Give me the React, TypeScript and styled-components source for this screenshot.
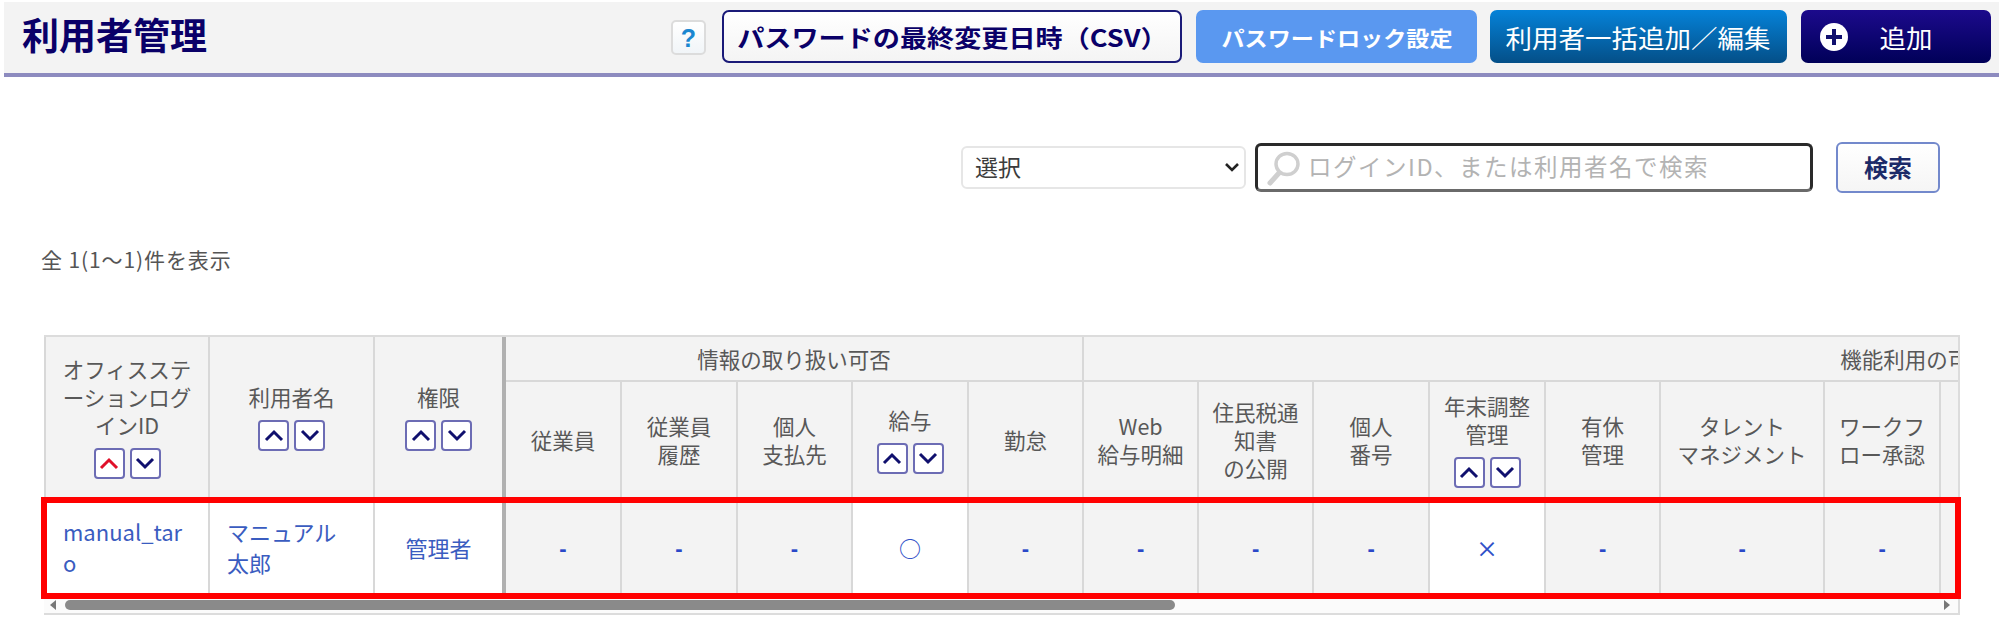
import React from "react";
import styled, { createGlobalStyle } from "styled-components";

const Global = createGlobalStyle`
  html, body { margin: 0; padding: 0; background: #fff; }
  body { font-family: "Noto Sans CJK JP", "Noto Sans", sans-serif; overflow: hidden; }
  * { box-sizing: border-box; }
`;

const Page = styled.div`
  width: 2000px;
  height: 640px;
  padding: 2px 1px 0 4px;
  overflow: hidden;
`;

const Header = styled.header`
  display: flex;
  align-items: center;
  height: 75px;
  padding: 8px 8px 10px 18px;
  background: #f3f3f3;
  border-bottom: 4px solid #8d8bbf;
`;

const Stretch = styled.span<{ $sx: number }>`
  display: inline-block;
  white-space: nowrap;
  transform: scaleX(${(p) => p.$sx});
  transform-origin: center;
`;

const Title = styled.h1`
  margin: 0 auto 5px 0;
  font-size: 37px;
  line-height: 44px;
  font-weight: 700;
  color: #0a0068;
`;

const HelpButton = styled.button`
  width: 35px;
  height: 35px;
  margin: 2px 16px 0 0;
  padding: 0;
  border: 2px solid #dcdcdc;
  border-radius: 5px;
  background: linear-gradient(#ffffff, #f1f5f8);
  color: #1b87d0;
  font: 700 25px/30px "Liberation Sans", sans-serif;
`;

const ActionButton = styled.button<{ $w: number; $size: number; $weight?: number; $bg: string; $fg: string; $border?: string; $gap?: number }>`
  display: flex;
  align-items: center;
  justify-content: center;
  width: ${(p) => p.$w}px;
  height: 53px;
  margin-right: ${(p) => p.$gap ?? 0}px;
  padding: 0;
  border: ${(p) => p.$border ?? "none"};
  border-radius: 7px;
  background: ${(p) => p.$bg};
  color: ${(p) => p.$fg};
  font-family: "Noto Sans CJK JP", sans-serif;
  font-size: ${(p) => p.$size}px;
  font-weight: ${(p) => p.$weight ?? 400};
  white-space: nowrap;
`;

const AddIcon = styled.svg`
  width: 28px;
  height: 28px;
  margin-right: 33px;
  margin-left: -41px;
`;

const SearchRow = styled.div`
  display: flex;
  align-items: center;
  justify-content: flex-end;
  height: 51px;
  margin-top: 65px;
  padding-right: 59px;
`;

const SelectWrap = styled.div`
  position: relative;
  width: 285px;
  height: 43px;
  margin-right: 9px;
`;

const Select = styled.select`
  appearance: none;
  width: 100%;
  height: 100%;
  padding: 0 40px 4px 12px;
  background: #fff;
  border: 2px solid #e6e6e6;
  border-radius: 6px;
  color: #3c3c3c;
  font-family: "Noto Sans CJK JP", sans-serif;
  font-size: 23px;
`;

const SelectChevron = styled.svg`
  position: absolute;
  right: 6px;
  top: 15px;
  width: 16px;
  height: 12px;
  pointer-events: none;
`;

const SearchBox = styled.label`
  display: flex;
  align-items: center;
  width: 558px;
  height: 49px;
  margin-right: 23px;
  padding-left: 9px;
  border: 3px solid #2a2a2a;
  border-bottom-color: #6a6a6a;
  border-radius: 6px;
  background: #fff;
`;

const SearchGlyph = styled.svg`
  flex: none;
  width: 34px;
  height: 36px;
  margin-right: 7px;
`;

const SearchInput = styled.input`
  flex: 1;
  min-width: 0;
  border: none;
  outline: none;
  padding: 0 0 4px;
  font-family: "Noto Sans CJK JP", sans-serif;
  font-size: 23.5px;
  letter-spacing: 1.5px;
  background: transparent;
  &::placeholder { color: #b3b3b3; opacity: 1; }
`;

const SearchButton = styled.button`
  width: 104px;
  height: 51px;
  padding: 0 0 2px;
  border: 2px solid #7389cc;
  border-radius: 6px;
  background: linear-gradient(#ffffff, #f5f5f5);
  color: #1c2a68;
  font-family: "Noto Sans CJK JP", sans-serif;
  font-size: 24px;
  font-weight: 700;
`;

const Count = styled.p`
  margin: 51px 0 0 37px;
  color: #555;
  font-size: 21px;
  letter-spacing: 0.9px;
  line-height: 30px;
`;

const TableFrame = styled.div`
  position: relative;
  width: 1916px;
  margin: 61px 0 0 40px;
`;

const TableScroller = styled.div`
  overflow: hidden;
  border-top: 2px solid #dcdcdc;
  border-right: 2px solid #dcdcdc;
  border-bottom: 2px solid #dcdcdc;
`;

const Table = styled.table`
  width: 2705px;
  table-layout: fixed;
  border-collapse: separate;
  border-spacing: 0;
  font-size: 21.5px;
  line-height: 28px;
`;

const Th = styled.th<{ $thick?: boolean; $first?: boolean }>`
  padding: 0;
  background: #f3f3f3;
  color: #585858;
  font-weight: 400;
  text-align: center;
  vertical-align: middle;
  border-bottom: 2px solid #d8d8d8;
  border-right: ${(p) => (p.$thick ? "4px solid #b0b0b0" : "2px solid #d8d8d8")};
  border-left: ${(p) => (p.$first ? "2px solid #d8d8d8" : "none")};
`;

const Td = styled.td<{ $thick?: boolean; $first?: boolean; $white?: boolean; $left?: boolean }>`
  height: 98px;
  padding: 0 0 2px ${(p) => (p.$left ? "17px" : "0")};
  background: ${(p) => (p.$white ? "#fff" : "#f3f3f3")};
  color: #3a5cc0;
  font-size: 22px;
  line-height: 31px;
  text-align: ${(p) => (p.$left ? "left" : "center")};
  border-right: ${(p) => (p.$thick ? "4px solid #b0b0b0" : "2px solid #d8d8d8")};
  border-left: ${(p) => (p.$first ? "2px solid #d8d8d8" : "none")};
`;

const Dash = styled.span`
  color: #2a48c8;
  font-weight: 700;
  font-family: "Liberation Sans", sans-serif;
`;

const Mark = styled.span`
  color: #3050c8;
  font-weight: 500;
`;

const SortPair = styled.div`
  display: flex;
  justify-content: center;
  gap: 5px;
  margin-top: 9px;
`;

const SortButton = styled.button`
  display: flex;
  align-items: center;
  justify-content: center;
  width: 31px;
  height: 31px;
  padding: 0;
  border: 2px solid #6c6cb4;
  border-radius: 4px;
  background: #fff;
`;

const Scrollbar = styled.div`
  display: flex;
  align-items: center;
  height: 16px;
  padding: 0 8px 0 6px;
  background: #fbfbfb;
`;

const ScrollArrow = styled.svg`
  flex: none;
  width: 6px;
  height: 10px;
`;

const ScrollThumb = styled.div`
  width: 1110px;
  height: 10px;
  margin: 0 auto 0 9px;
  border-radius: 5px;
  background: #8a8a8a;
`;

const Highlight = styled.div`
  position: absolute;
  left: -3px;
  top: 162px;
  width: 1920px;
  height: 102px;
  border: 6px solid #ff0000;
  pointer-events: none;
`;

const Sort = ({ active = false }: { active?: boolean }) => (
  <SortPair>
    <SortButton aria-label="昇順">
      <svg width="20" height="13" viewBox="0 0 20 13">
        <polyline points="2,11 10,3 18,11" fill="none" stroke={active ? "#e0102a" : "#10106e"} strokeWidth="3" />
      </svg>
    </SortButton>
    <SortButton aria-label="降順">
      <svg width="20" height="13" viewBox="0 0 20 13">
        <polyline points="2,2 10,10 18,2" fill="none" stroke="#10106e" strokeWidth="3" />
      </svg>
    </SortButton>
  </SortPair>
);

const widths = [166, 165, 131, 116, 116, 115, 116, 115, 115, 115, 116, 116, 115, 164, 116, 116, 692];

const Plain = "-";

export default function App() {
  return (
    <>
      <Global />
      <Page>
        <Header>
          <Title>利用者管理</Title>
          <HelpButton>?</HelpButton>
          <ActionButton $w={460} $size={24} $weight={700} $gap={14} $fg="#0a0068" $bg="linear-gradient(#ffffff, #f4f4f4)" $border="2px solid #1a1a78">
            <Stretch $sx={1.13}>パスワードの最終変更日時（CSV）</Stretch>
          </ActionButton>
          <ActionButton $w={281} $size={21} $weight={700} $gap={13} $fg="#fff" $bg="#5a98f0">
            <Stretch $sx={1.1}>パスワードロック設定</Stretch>
          </ActionButton>
          <ActionButton $w={297} $size={25} $gap={14} $fg="#fff" $bg="linear-gradient(#0582d8, #044f88)">
            <Stretch $sx={1.06}>利用者一括追加／編集</Stretch>
          </ActionButton>
          <ActionButton $w={190} $size={25} $fg="#fff" $bg="linear-gradient(#1c0a8c, #000058)">
            <AddIcon viewBox="0 0 28 28">
              <circle cx="14" cy="14" r="14" fill="#fff" />
              <path d="M14 6v16M6 14h16" stroke="#10106e" strokeWidth="4" />
            </AddIcon>
            <Stretch $sx={1.06}>追加</Stretch>
          </ActionButton>
        </Header>

        <SearchRow>
          <SelectWrap>
            <Select defaultValue="">
              <option value="">選択</option>
            </Select>
            <SelectChevron viewBox="0 0 16 12">
              <polyline points="2,3 8,9 14,3" fill="none" stroke="#222" strokeWidth="2.6" />
            </SelectChevron>
          </SelectWrap>
          <SearchBox>
            <SearchGlyph viewBox="0 0 34 36">
              <ellipse cx="20" cy="14" rx="11" ry="10.5" fill="none" stroke="#cfcfcf" strokeWidth="3.5" />
              <path d="M12 23L3 33" stroke="#cfcfcf" strokeWidth="5" strokeLinecap="round" />
            </SearchGlyph>
            <SearchInput placeholder="ログインID、または利用者名で検索" />
          </SearchBox>
          <SearchButton>検索</SearchButton>
        </SearchRow>

        <Count>全 1(1～1)件を表示</Count>

        <TableFrame>
          <TableScroller>
            <Table>
              <colgroup>
                {widths.map((w, i) => (
                  <col key={i} style={{ width: w }} />
                ))}
              </colgroup>
              <thead>
                <tr style={{ height: 45 }}>
                  <Th rowSpan={2} $first>
                    オフィスステ<br />ーションログ<br />インID
                    <Sort active />
                  </Th>
                  <Th rowSpan={2}>
                    利用者名
                    <Sort />
                  </Th>
                  <Th rowSpan={2} $thick>
                    権限
                    <Sort />
                  </Th>
                  <Th colSpan={5}>情報の取り扱い可否</Th>
                  <Th colSpan={9}>機能利用の可否</Th>
                </tr>
                <tr style={{ height: 117 }}>
                  <Th>従業員</Th>
                  <Th>従業員<br />履歴</Th>
                  <Th>個人<br />支払先</Th>
                  <Th>
                    給与
                    <Sort />
                  </Th>
                  <Th>勤怠</Th>
                  <Th>Web<br />給与明細</Th>
                  <Th>住民税通<br />知書<br />の公開</Th>
                  <Th>個人<br />番号</Th>
                  <Th>
                    年末調整<br />管理
                    <Sort />
                  </Th>
                  <Th>有休<br />管理</Th>
                  <Th>タレント<br />マネジメント</Th>
                  <Th>ワークフ<br />ロー承認</Th>
                  <Th />
                  <Th />
                </tr>
              </thead>
              <tbody>
                <tr>
                  <Td $first $white $left>manual_tar<br />o</Td>
                  <Td $white $left>マニュアル<br />太郎</Td>
                  <Td $white $thick>管理者</Td>
                  <Td><Dash>{Plain}</Dash></Td>
                  <Td><Dash>{Plain}</Dash></Td>
                  <Td><Dash>{Plain}</Dash></Td>
                  <Td $white><Mark>○</Mark></Td>
                  <Td><Dash>{Plain}</Dash></Td>
                  <Td><Dash>{Plain}</Dash></Td>
                  <Td><Dash>{Plain}</Dash></Td>
                  <Td><Dash>{Plain}</Dash></Td>
                  <Td $white><Mark>×</Mark></Td>
                  <Td><Dash>{Plain}</Dash></Td>
                  <Td><Dash>{Plain}</Dash></Td>
                  <Td><Dash>{Plain}</Dash></Td>
                  <Td />
                  <Td />
                </tr>
              </tbody>
            </Table>
            <Scrollbar>
              <ScrollArrow viewBox="0 0 6 10"><path d="M6 0L0 5l6 5z" fill="#777" /></ScrollArrow>
              <ScrollThumb />
              <ScrollArrow viewBox="0 0 6 10"><path d="M0 0l6 5-6 5z" fill="#777" /></ScrollArrow>
            </Scrollbar>
          </TableScroller>
          <Highlight />
        </TableFrame>
      </Page>
    </>
  );
}
